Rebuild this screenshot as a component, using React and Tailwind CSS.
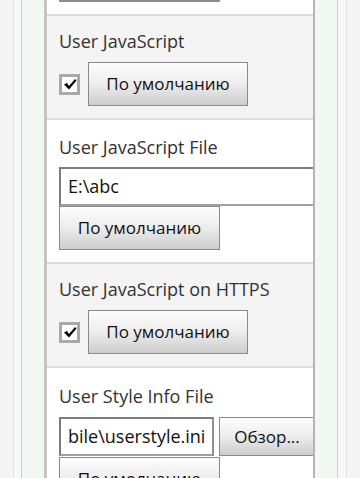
const Button = ({ children, className = "" }) => (
  <div
    className={`flex shrink-0 items-center justify-center border border-[#8a8a8a] bg-gradient-to-b from-[#fdfdfd] via-[#ececec] to-[#cdcdcd] text-[17px] text-[#111] ${className}`}
  >
    {children}
  </div>
);

const Checkbox = () => (
  <div className="flex h-[21px] w-[21px] shrink-0 items-center justify-center border-[3px] border-[#a9a9a9] bg-white">
    <svg width="14" height="12" viewBox="0 0 14 12">
      <path d="M1 6.5 L4 5 L6 8 L12 1 L13.5 2.5 L6 11.5 Z" fill="#000" />
    </svg>
  </div>
);

const Input = ({ children, className = "" }) => (
  <div
    className={`flex h-[39px] shrink-0 items-center border-2 border-[#7c7c7c] border-b-[#a0a0a0] border-r-[#909090] bg-white pl-[7px] text-[18px] text-[#111] ${className}`}
  >
    {children}
  </div>
);

const Label = ({ children }) => (
  <div className="h-[24px] text-[18px] leading-[24px] text-[#333]">{children}</div>
);

export default function App() {
  return (
    <div
      className="flex h-[478px] w-[360px] overflow-hidden bg-[#f4f4f4]"
      style={{ fontFamily: '"Open Sans", "DejaVu Sans", sans-serif' }}
    >
      {/* left frame */}
      <div className="flex shrink-0">
        <div className="w-[13px] bg-[#f4f4f4]" />
        <div className="w-px bg-[#e2e2e2]" />
        <div className="w-[7px] bg-[#f7f7f7]" />
        <div className="w-px bg-[#cfcfcf]" />
        <div className="w-[22px] bg-[#f1f8f2]" />
        <div className="w-[3px] bg-[#c4c4c4]" />
      </div>

      {/* settings panel */}
      <div className="flex w-[266px] shrink-0 flex-col">
        <div className="h-[14px] shrink-0 bg-white">
          <div className="ml-[12px] h-[2px] w-[161px] bg-[#8c8c8c]" />
        </div>

        <div className="shrink-0 border-t-2 border-[#dcdcdc] bg-[#f4f4f4] pl-[12px] pt-[13px] pb-[12px]">
          <Label>User JavaScript</Label>
          <div className="mt-[9px] flex items-center gap-[8px]">
            <Checkbox />
            <Button className="h-[44px] w-[160px]">По умолчанию</Button>
          </div>
        </div>

        <div className="shrink-0 border-t-2 border-[#dcdcdc] bg-white pl-[12px] pt-[15px] pb-[12px]">
          <Label>User JavaScript File</Label>
          <Input className="mt-[8px] w-[256px]">E:\abc</Input>
          <Button className="h-[44px] w-[161px]">По умолчанию</Button>
        </div>

        <div className="shrink-0 border-t-2 border-[#dcdcdc] bg-[#f4f4f4] pl-[12px] pt-[13px] pb-[12px]">
          <Label>User JavaScript on HTTPS</Label>
          <div className="mt-[9px] flex items-center gap-[8px]">
            <Checkbox />
            <Button className="h-[44px] w-[160px]">По умолчанию</Button>
          </div>
        </div>

        <div className="shrink-0 border-t-2 border-[#dcdcdc] bg-white pl-[12px] pt-[16px]">
          <Label>User Style Info File</Label>
          <div className="mt-[9px] flex gap-[5px]">
            <Input className="w-[155px] overflow-hidden whitespace-nowrap">bile\userstyle.ini</Input>
            <Button className="h-[39px] w-[96px]">Обзор...</Button>
          </div>
          <Button className="mt-px h-[44px] w-[161px]">По умолчанию</Button>
        </div>
      </div>

      {/* right frame */}
      <div className="flex shrink-0 grow">
        <div className="w-[2px] bg-[#b4b4b4]" />
        <div className="w-[22px] bg-[#f1f8f2]" />
        <div className="w-px bg-[#cfcfcf]" />
        <div className="w-[8px] bg-[#f7f7f7]" />
        <div className="w-px bg-[#e2e2e2]" />
        <div className="grow bg-[#f4f4f4]" />
      </div>
    </div>
  );
}
